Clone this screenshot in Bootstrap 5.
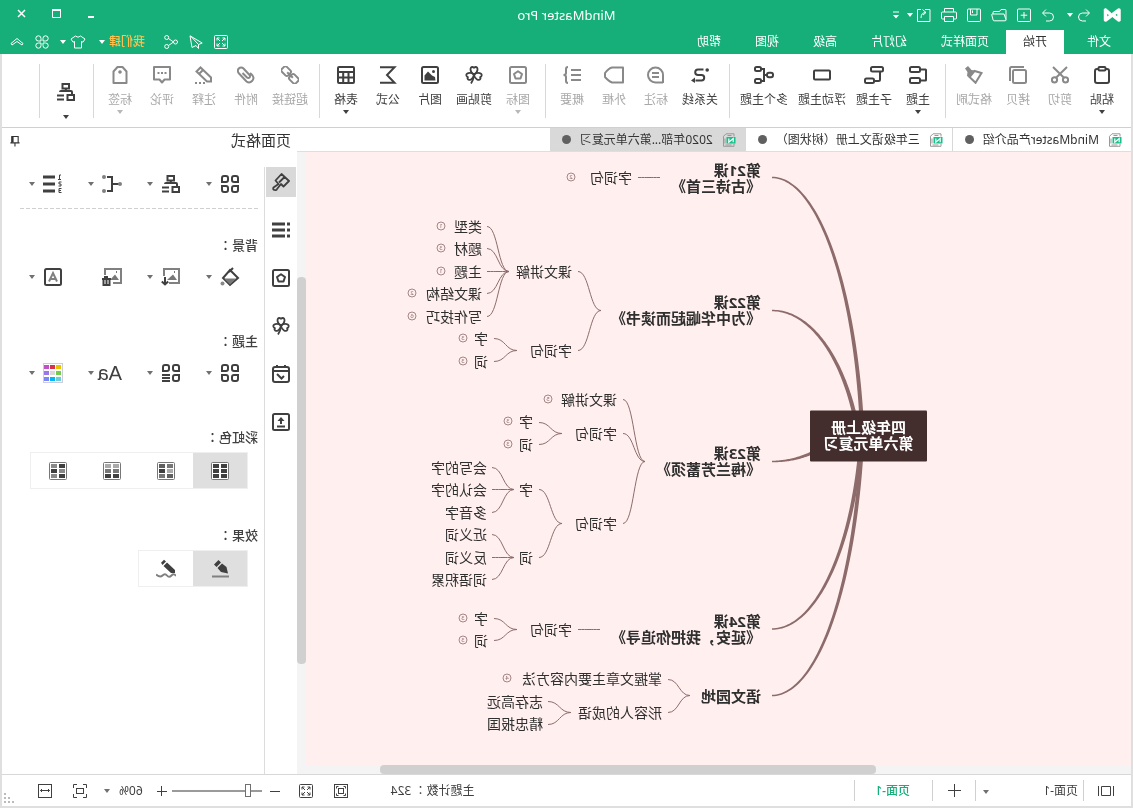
<!DOCTYPE html>
<html lang="zh-CN">
<head>
<meta charset="utf-8">
<meta name="viewport" content="width=device-width, initial-scale=1">
<title>MindMaster Pro</title>
<link href="https://cdn.jsdelivr.net/npm/bootstrap@5.3.0/dist/css/bootstrap.min.css" rel="stylesheet">
<style>
  :root { --brand: #16ae79; --ink: #404040; --line: #d8d8d8; --branch: #8d6b6b; }
  body { font-family: "Noto Sans", "Noto Sans CJK SC", sans-serif; font-size: 12px; line-height: 16px; color: #333; background: #fff; }
  /* the whole window is shown flipped left to right */
  .app-window { min-height: 100vh; transform: scaleX(-1); overflow: hidden; }
  .app-body { border: 2px solid #dfdfdf; border-top: 0; min-height: 0; }
  button { border: 0; background: none; padding: 0; color: inherit; line-height: 16px; }
  svg { display: block; fill: none; stroke: currentColor; stroke-width: 2; flex: none; }
  .ic { width: 18px; height: 18px; }
  .ic-sm { width: 14px; height: 14px; stroke-width: 1; }
  .ic-md { width: 20px; height: 20px; }
  .line { stroke-width: 1; }
  .tri { width: 0; height: 0; border: 3px solid transparent; border-top: 4px solid currentColor; border-bottom: 0; flex: none; }
  /* full-width colon set in the middle of its square */
  .mid-colon { font-family: "Noto Sans CJK TC", sans-serif; }

  .title-row { background: var(--brand); color: #fff; height: 30px; }
  .title-left { padding-left: 12px; }
  .title-text { font-size: 13px; }
  .win-buttons { gap: 21px; padding-right: 14px; }
  .quick { gap: 10px; }
  .menu-row { background: var(--brand); color: #fff; height: 24px; }
  .menu-row .nav { padding-left: 5px; }
  .menu-row .nav-link { color: #fff; padding: 0 17px; line-height: 24px; border-radius: 0; }
  .menu-row .nav-link.active { background: #fff; color: #333; }
  .menu-row .first-tab { margin-right: 6px; }
  .menu-tools { gap: 11px; padding-right: 10px; }
  .user-btn { margin-right: 2px; }
  .user-name { color: #ffc04d; font-weight: 500; }

  .ribbon { height: 74px; border-bottom: 1px solid #d0d0d0; padding-left: 8px; }
  .tool { display: flex; flex-direction: column; align-items: center; min-width: 42px; padding: 12px 5px 0; color: var(--ink); }
  .tool span { margin-top: 8px; white-space: nowrap; }
  .tool .tri { margin-top: 2px; }
  .tool:disabled { color: #898989; }
  .tool:disabled span { color: #a8a8a8; }
  .tool:disabled .tri { color: #b8b8b8; }
  .tool.big { padding-top: 29px; }
  .tool.big .tri { margin-top: 14px; }
  .rule { width: 1px; background: var(--line); margin: 10px 6px 9px 5px; flex: none; }

  .doc-tab { height: 23px; padding: 0 12px 0 9px; gap: 9px; color: #333; text-decoration: none; border-right: 1px solid var(--line); white-space: nowrap; }
  .doc-tab.current { background: #d9d9d9; border-right: 0; }
  .dot { width: 9px; height: 9px; border-radius: 50%; background: #606060; }
  .doc-tabs { height: 24px; border-bottom: 1px solid #dedede; }

  .canvas { background: #fff0ef; position: relative; overflow: hidden; }
  .canvas > svg { position: absolute; left: 0; top: 0; width: 100%; height: 100%; stroke: var(--branch); stroke-width: 1; }
  .topic { position: absolute; font-size: 14px; white-space: nowrap; transform: translateY(-50%); color: #2f2f2f; }
  .topic.main-topic { font-size: 15px; font-weight: 700; }
  .topic.central { width: 117px; padding: 8px 0 11px; text-align: center; color: #fff; background: #432e2d; border-radius: 1px; font-size: 15px; font-weight: 700; }
  .count { position: absolute; width: 9px; height: 9px; border: 1px solid #a58585; border-radius: 50%; color: #8d6b6b; font-size: 6px; line-height: 7px; text-align: center; transform: translate(-50%, -50%); }
  .hbar { height: 9px; background: #f4f4f4; padding-left: 255px; }
  .hbar div { width: 87%; background: #d0d0d0; border-radius: 4px; }
  .vbar { width: 9px; background: #f4f4f4; padding-top: 125px; }
  .vbar div { height: 387px; background: #d0d0d0; border-radius: 4px; }

  .side { width: 295px; flex: none; }
  .side-head { height: 39px; padding: 0 7px 0 6px; }
  .side-head h2 { font-size: 15px; line-height: 24px; margin: 0; font-weight: 400; }
  .strip { width: 32px; gap: 18px; flex: none; padding-left: 1px; }
  .strip button { width: 30px; height: 30px; display: grid; place-items: center; color: var(--ink); }
  .strip .on { background: #d9d9d9; }
  .props { border-left: 1px solid #dcdcdc; padding: 7px 18px 0 6px; color: var(--ink); min-width: 0; }
  .pick-row { display: grid; grid-template-columns: repeat(4, 59px); padding-left: 18px; height: 20px; }
  .pick-row button { display: flex; align-items: center; gap: 8px; }
  .pick-row .tri { color: #707070; }
  .pick-row.spaced { margin: 13px 0 45px; }
  .dash { height: 1px; margin: 14px 0 27px; background: repeating-linear-gradient(90deg, #d0d0d0 0 4px, transparent 4px 6px); }
  .props h3 { font-size: 13px; line-height: 18px; font-weight: 500; margin: 0; }
  .aa-text { width: 22px; font-family: "Liberation Sans", sans-serif; font-size: 20px; line-height: 20px; margin-right: -2px; }
  .seg { border: 1px solid #efefef; width: max-content; margin: 6px 0 37px 10px; }
  .seg button { width: 54px; height: 35px; display: grid; place-items: center; }
  .seg .on { background: #dfdfdf; }

  .status { height: 32px; border-top: 1px solid #d8d8d8; color: var(--ink); }
  .status .bar { width: 1px; height: 21px; background: #d0d0d0; flex: none; }
  .status .tri { color: #707070; }
  .page-pick { width: 107px; position: relative; }
  .page-pick select { appearance: none; border: 0; background: none; padding: 0 0 0 5px; width: 100%; color: inherit; }
  .page-pick .tri { position: absolute; right: 7px; top: 7px; pointer-events: none; }
  .page-link-on { color: var(--brand); font-weight: 500; text-decoration: none; padding: 0 20px 0 22px; }
  input[type=range] { appearance: none; width: 90px; height: 16px; background: linear-gradient(#9a9a9a, #9a9a9a) center / 100% 2px no-repeat; margin: 0; }
  input[type=range]::-webkit-slider-thumb { appearance: none; width: 6px; height: 13px; background: #fff; border: 1px solid #707070; }
  .view-btn { padding: 0 14px 0 17px; }
  .add-btn { padding: 0 14px; }
  .topic-count { margin-right: 43px; }
  .fill-btn { margin-left: 21px; }
  .minus-btn { margin: 0 8px 0 19px; }
  .plus-btn { margin: 0 14px 0 5px; }
  .percent { margin-right: 9px; }
  .focus-btn { margin-left: 17px; }
  .wide-btn { margin: 0 24px 0 21px; }
  .zoom-tools { padding-right: 2px; }
  .grip { margin-top: 15px; }
</style>
</head>
<body>

<svg width="0" height="0" class="position-absolute" aria-hidden="true">
  <symbol id="logo" viewBox="0 0 18 14"><path d="M2 12V2L15.500 12V2M2 12 6.500 8.500M15.500 2 11.500 5.500" stroke-width="3.500" stroke-linejoin="round" stroke-linecap="round"/></symbol>
  <symbol id="undo" viewBox="0 0 14 14"><path d="M5 1.500 1.500 5 5 8.500M2 5h6.500a4 4 0 0 1 0 8H5"/></symbol>
  <symbol id="redo" viewBox="0 0 14 14"><path d="M9 1.500 12.500 5 9 8.500M12 5H5.500a4 4 0 0 0 0 8H9"/></symbol>
  <symbol id="new" viewBox="0 0 14 14"><rect x=".5" y="1" width="13" height="12.500" rx="1"/><path d="M7 4v6.500M3.800 7.200h6.500"/></symbol>
  <symbol id="open" viewBox="0 0 16 14"><path d="M1 11.500V2.500a1 1 0 0 1 1-1h4l1.500 2H13a1 1 0 0 1 1 1V6M3 6h11.500q1 0 .7 1l-1.300 5q-.2.800-1 .8H2q-1.200 0-1-1.200z"/></symbol>
  <symbol id="save" viewBox="0 0 14 14"><rect x=".5" y="1" width="13" height="12.500" rx="1"/><path d="M4 1v6h6.500V1M8.500 2.500V5"/></symbol>
  <symbol id="print" viewBox="0 0 16 14"><path d="M3.500 4V.5h9V4M3.500 11H1.500a1 1 0 0 1-1-1V5a1 1 0 0 1 1-1h13a1 1 0 0 1 1 1v5a1 1 0 0 1-1 1h-2M3.500 8.500h9v5h-9z"/></symbol>
  <symbol id="export" viewBox="0 0 14 14"><path d="M6 1.500H1v12h12.500V1.500H10M5 4.500l3.500-3M5 4.500 8 7M5 4.500q5 0 5 5.500"/></symbol>
  <symbol id="full" viewBox="0 0 14 14"><rect x=".5" y=".5" width="13" height="13" rx="1"/><path d="M3 5.500V3h2.500M8.500 3H11v2.500M11 8.500V11H8.500M5.500 11H3V8.500M3 3l3 3M11 3 8 6M11 11 8 8M3 11l3-3"/></symbol>
  <symbol id="send" viewBox="0 0 14 14"><path d="M13 .8.8 8l3.700 1.500v4L7 10.500l4 2zM12.500 1 4.500 9.500"/></symbol>
  <symbol id="share" viewBox="0 0 14 14"><circle cx="2.500" cy="7" r="2"/><circle cx="11.300" cy="2.500" r="2"/><circle cx="11.300" cy="11.500" r="2"/><path d="M4.500 7 9.500 3.500M4.500 7 9.500 10.500"/></symbol>
  <symbol id="shirt" viewBox="0 0 16 14"><path d="M5.500 1q2.500 2.500 5 0l4.500 3-2 3.200-1.500-.7V13h-7V6.500L3 7.200 1 4z"/></symbol>
  <symbol id="four" viewBox="0 0 14 14"><path d="M6 6V3.500A2.600 2.600 0 1 0 3.400 6zM8 6V3.500A2.600 2.600 0 1 1 10.600 6zM6 8v2.500A2.600 2.600 0 1 1 3.400 8zM8 8v2.500A2.600 2.600 0 1 0 10.600 8z"/></symbol>
  <symbol id="up" viewBox="0 0 14 14"><path d="M1 8.500 7 3.500l6 5-1 1.500-5-3.500L2 10z"/></symbol>

  <symbol id="paste" viewBox="0 0 18 18"><rect x="2" y="3" width="14" height="14" rx="2"/><rect x="5.500" y="1" width="7" height="3.500" rx="1" fill="#fff"/></symbol>
  <symbol id="cut" viewBox="0 0 18 18"><circle cx="3.500" cy="13.800" r="2.600"/><circle cx="14.500" cy="13.800" r="2.600"/><path d="M5 11.800 16 1M13 11.800 2 1"/></symbol>
  <symbol id="copy" viewBox="0 0 18 18"><rect x="1" y="4" width="13" height="13" rx="1.500"/><path d="M3 1h12.500A1.500 1.500 0 0 1 17 2.500V15"/></symbol>
  <symbol id="brush" viewBox="0 0 18 18"><path d="M1.500 7 8.500 5l5 6-6 5.800z"/><path d="M8.500 4.500 11.500 4l3.500-4 3 2.500-2.500 3.500.5 4-3 2z" fill="currentColor" stroke="none"/></symbol>
  <symbol id="topic" viewBox="0 0 18 18"><rect x="7" y="1" width="10" height="5" rx="1.500"/><rect x="7" y="12" width="10" height="5" rx="1.500"/><path d="M7 3.500H1.500q-.5 0-.5.5v10q0 .5.500.5H7"/></symbol>
  <symbol id="subtopic" viewBox="0 0 20 18"><rect x="1" y="1" width="12" height="4.500" rx="1.500"/><rect x="10" y="12.500" width="9" height="4.500" rx="1.500"/><path d="M4 6v7.500q0 1.500 1.500 1.500H10"/></symbol>
  <symbol id="float" viewBox="0 0 18 18"><rect x="1" y="4.500" width="16" height="9" rx="1"/></symbol>
  <symbol id="multi" viewBox="0 0 20 18"><rect x="1" y="6.800" width="6" height="4.400" rx="2"/><rect x="13" y="1" width="6" height="4" rx="1.500"/><rect x="13" y="13" width="6" height="4" rx="1.500"/><path d="M7 9h3M13 3h-3v12h3"/></symbol>
  <symbol id="relation" viewBox="0 0 18 18"><path d="M5.500 3.500H11a2.800 2.800 0 0 1 0 5.600H7.500a2.700 2.700 0 0 0 0 5.400h6"/><circle cx="1.800" cy="4" r="1.800" fill="currentColor" stroke="none"/><path d="M14 11.500v5.500l4-2.500z" fill="currentColor" stroke="none"/></symbol>
  <symbol id="callout" viewBox="0 0 18 18"><path d="M2 17V9a7.500 7.500 0 1 1 7.500 7.500H2"/><path d="M6 7h7M6 11h7"/></symbol>
  <symbol id="frame" viewBox="0 0 20 18"><path d="M1 1.500h11q3 .5 7 5.500v4q-4 4.500-7 5.500H1z" stroke-linejoin="round"/></symbol>
  <symbol id="summary" viewBox="0 0 18 18"><path d="M0 4h10M0 9h10M0 14h10M13 1q2 0 2 2v4q0 2 2.500 2-2.500 0-2.500 2v4q0 2-2 2"/></symbol>
  <symbol id="icon" viewBox="0 0 18 18"><rect x="1" y="1" width="16" height="16" rx="1.500"/><path d="M9 5.200 13 8l-1.500 4.500h-5L5 8z" stroke-linejoin="round"/></symbol>
  <symbol id="clover" viewBox="0 0 18 18"><g stroke-width="1.800"><path d="M9 8.500C4.500 6 4.800 1 7.300 1Q9 1 9 2.600 9 1 10.700 1C13.200 1 13.500 6 9 8.500z"/><path d="M9 8.500C4.500 6 4.800 1 7.300 1Q9 1 9 2.600 9 1 10.700 1C13.200 1 13.500 6 9 8.500z" transform="rotate(112 9 8.500)"/><path d="M9 8.500C4.500 6 4.800 1 7.300 1Q9 1 9 2.600 9 1 10.700 1C13.200 1 13.500 6 9 8.500z" transform="rotate(-112 9 8.500)"/><path d="M9 8.500Q9.500 14 12 17.500"/></g></symbol>
  <symbol id="image" viewBox="0 0 18 18"><rect x="1" y="1" width="16" height="16" rx="1.500"/><path d="M3.500 14.500 4 11l3-1.500 4-4 3.500 4v5z" fill="currentColor" stroke="none"/><circle cx="5.500" cy="5.500" r="1.500" fill="currentColor" stroke="none"/></symbol>
  <symbol id="sigma" viewBox="0 0 18 18"><path d="M17 1.200H2.500L10 9l-7.500 7.800H17"/></symbol>
  <symbol id="tbl" viewBox="0 0 18 18"><rect x="1" y="1" width="16" height="16" rx="1"/><path d="M1 6h16M1 11.500h16M6.500 6v11M11.800 6v11"/></symbol>
  <symbol id="chain" viewBox="0 0 18 18"><g transform="rotate(-45 9 9)"><rect x="-1" y="5.500" width="9" height="7" rx="2"/><rect x="10" y="5.500" width="9" height="7" rx="2"/><path d="M5 9h8"/></g></symbol>
  <symbol id="clip" viewBox="0 0 18 18"><path d="M12.500 7 8 11.500a1.700 1.700 0 0 1-2.500-2.500l6-6.500a3.300 3.300 0 0 1 4.700 4.700L8.500 15.500a4.300 4.300 0 0 1-6-6L5 7"/></symbol>
  <symbol id="note" viewBox="0 0 18 18"><path d="M2 11.500 12.500 1.500l4 4L6 15.500H2zM10 4l4 4" /><path d="M8 17h2M12 17h2M16 17h2"/></symbol>
  <symbol id="comment" viewBox="0 0 18 18"><path d="M1 1h16v12.500h-5.500L9 16.500 6.500 13.500H1z" stroke-linejoin="round"/><path d="M4.500 7h2M8 7h2M11.500 7h2"/></symbol>
  <symbol id="tag" viewBox="0 0 18 18"><path d="M2.500 17V5.500L6.500 1h5l4 4.500V17z" stroke-linejoin="round"/><circle cx="9" cy="6" r="1.800" fill="currentColor" stroke="none"/></symbol>
  <symbol id="layout" viewBox="0 0 18 18"><rect x="6" y="1" width="6.500" height="4.500"/><path d="M9.200 5.500V8M3 12V9q0-1 1-1h10q1 0 1 1"/><rect x="1" y="12" width="6.500" height="5"/><path d="M11 12.500h7M11 16.500h7"/></symbol>
  <symbol id="doc" viewBox="0 0 14 14"><path d="M2 3.500V.8h8l2.500 2.500v10H2v-2.500" stroke="#999" stroke-width="1"/><path d="M4.500 2.500h4M4.500 12h6M11 5.500v5" stroke="#999" stroke-width="1"/><rect x=".5" y="4" width="9" height="6.500" fill="#16c08a" stroke="none"/><path d="M2.800 9.300V5.500L7.200 9.300V5.500" stroke="#fff" stroke-width="1.200"/></symbol>
  <symbol id="pin" viewBox="0 0 12 12"><path d="M2 .5h7v7H2zM.5 7.500h10M5.500 7.500v4" stroke-width="1.200"/><path d="M7 1h2v6H7z" fill="currentColor" stroke="none"/></symbol>

  <symbol id="paint" viewBox="0 0 18 18"><path d="M1 8 8.500 1l6 6.500-3 3.500 5 3.500q1 2-1 2.500t-2.500-1L9 11l-2.500 2.500zM5.500 4 11 9.500" stroke-width="1.800" stroke-linejoin="round"/></symbol>
  <symbol id="outline" viewBox="0 0 18 18"><path d="M5 3h13M5 9h13M5 15h13" stroke-width="3"/><path d="M0 3h3M0 9h3M0 15h3" stroke-width="3"/></symbol>
  <symbol id="cal" viewBox="0 0 18 18"><rect x="1" y="2" width="16" height="15" rx="2"/><path d="M1 6h16M5 0v3M13 0v3M13 9 8.500 13.500 6 11"/></symbol>
  <symbol id="upload" viewBox="0 0 18 18"><rect x="1" y="1" width="16" height="16" rx="1.500"/><path d="M9 11V5.500M5 13.500h8"/><path d="M5.500 8 9 4l3.500 4z" fill="currentColor" stroke="none"/></symbol>
  <symbol id="grid4" viewBox="0 0 20 20"><path d="M2 4q0-2 2-2h2q2 0 2 2v2q0 2-2 2H2zM12 4q0-2 2-2h2q2 0 2 2v4h-4q-2 0-2-2zM2 12h4q2 0 2 2v2q0 2-2 2H4q-2 0-2-2zM14 12h4v4q0 2-2 2h-2q-2 0-2-2v-2q0-2 2-2z"/></symbol>
  <symbol id="grid3" viewBox="0 0 20 20"><path d="M2 4q0-2 2-2h2q2 0 2 2v2q0 2-2 2H2zM12 4q0-2 2-2h2q2 0 2 2v4h-4q-2 0-2-2zM2 12h4q2 0 2 2v2q0 2-2 2H4q-2 0-2-2zM11 12h8M11 15h8M11 18h8"/></symbol>
  <symbol id="branch" viewBox="0 0 20 20"><path d="M3 10h6M15 3h-5v14h5"/><g fill="#808080" stroke="none"><circle cx="2" cy="10" r="2"/><circle cx="18" cy="3" r="2"/><circle cx="18" cy="17" r="2"/></g></symbol>
  <symbol id="numlist" viewBox="0 0 20 20"><path d="M8 3h12M8 10h12M8 17h12" stroke-width="3"/><path d="M2 1h1.500v4M2 5.500h3M1.500 8h2.500v2H2v2h2.500M1.500 14.500H4v4H1.500M2 16.500h2" stroke-width="1"/></symbol>
  <symbol id="bucket" viewBox="0 0 20 20"><path d="M2 11 10 3l7 8-7 7zM7 1l4 4" /><path d="M4 11.500h12l-6 6z" fill="#777" stroke="none"/><circle cx="17.500" cy="16.500" r="2" fill="#888" stroke="none"/></symbol>
  <symbol id="imgdown" viewBox="0 0 20 20"><g stroke="#808080"><path d="M12 16H2V2h15v7"/></g><path d="M4 13 8 7.500l6 5.500z" fill="#777" stroke="none"/><path d="M6 5h1" stroke="#777"/><path d="M16 10v7.500M12.800 14.500l3.200 3 3.200-3"/></symbol>
  <symbol id="imgdel" viewBox="0 0 20 20"><g stroke="#808080"><path d="M9 16H1V2h16v6"/></g><path d="M3 13 7 7.500l5 5.500z" fill="#777" stroke="none"/><path d="M5 5h1" stroke="#777"/><path d="M11 12h9M14 10h4M12.500 12v6h6v-6M15.500 13v4"/></symbol>
  <symbol id="boxa" viewBox="0 0 20 20"><rect x="2" y="2" width="16" height="16" rx="1.500"/><path d="M6 14.500 10 6l4 8.500M7.500 12h5" stroke="#808080"/></symbol>
  <symbol id="palette" viewBox="0 0 20 20"><rect x=".5" y=".5" width="19" height="19" fill="#fff" stroke="#ccd" stroke-width="1"/><g stroke="none"><path d="M2 2h5v4H2z" fill="#eac300"/><path d="M8 2h5v4H8z" fill="#d9304c"/><path d="M14 2h5v4h-5z" fill="#c050c8"/><path d="M2 8h5v4H2z" fill="#73cc4e"/><path d="M8 8h5v4H8z" fill="#d8d8d8"/><path d="M14 8h5v4h-5z" fill="#9a77e8"/><path d="M2 14h5v4H2z" fill="#6cccd8"/><path d="M8 14h5v4H8z" fill="#00b8f4"/><path d="M14 14h5v4h-5z" fill="#7a86f5"/></g></symbol>
  <symbol id="sw1" viewBox="0 0 18 18"><rect x=".5" y=".5" width="17" height="17" rx="1" fill="#fff" stroke="#777" stroke-width="1"/><path d="M2 4h6M10 4h6M2 9h6M10 9h6M2 14h6M10 14h6" stroke-width="4"/></symbol>
  <symbol id="sw2" viewBox="0 0 18 18"><rect x=".5" y=".5" width="17" height="17" rx="1" stroke="#777" stroke-width="1"/><g stroke-width="4"><path d="M2 4h6" stroke="#777"/><path d="M10 4h6M2 14h6" stroke="#606060"/><path d="M2 9h6" stroke="#aaa"/><path d="M10 9h6"/><path d="M10 14h6" stroke="#777"/></g></symbol>
  <symbol id="sw3" viewBox="0 0 18 18"><rect x=".5" y=".5" width="17" height="17" rx="1" stroke="#777" stroke-width="1"/><g stroke-width="4"><path d="M2 4h6M10 4h6" stroke="#aaa"/><path d="M2 9h6M10 9h6" stroke="#777"/><path d="M2 14h6M10 14h6"/></g></symbol>
  <symbol id="sw4" viewBox="0 0 18 18"><rect x=".5" y=".5" width="17" height="17" rx="1" stroke="#777" stroke-width="1"/><g stroke-width="4"><path d="M2 4h6M10 9h6M2 14h6"/><path d="M10 4h6M2 9h6M10 14h6" stroke="#888"/></g></symbol>
  <symbol id="pen" viewBox="0 0 20 20"><path d="M1 17.500h17" stroke="#808080"/><path d="M2 14.500 3.500 8 8 4.500l4.500 4.500L9 13zM9 3.500 11.500 1 16 5.500 13.500 8z" fill="currentColor" stroke="none"/></symbol>
  <symbol id="pencil" viewBox="0 0 20 20"><path d="M0 17q2-3 4.500-.5T9 16.500t4.500 0T20 15.500" stroke="#808080"/><path d="M1 14V11L9 3.500 12.500 7 5 14zM10 2.500 12 .8l3 3L13.500 6z" fill="currentColor" stroke="none"/></symbol>

  <symbol id="view" viewBox="0 0 16 14"><path d="M.5 2v10M15.500 2v10M3.500 2.500h9v9h-9z"/></symbol>
  <symbol id="fit" viewBox="0 0 14 14"><rect x=".5" y=".5" width="13" height="13"/><rect x="4.500" y="4.500" width="5" height="5"/><path d="M2.500 4.500v-2h2M9.500 2.500h2v2M11.500 9.500v2h-2M4.500 11.500h-2v-2"/></symbol>
  <symbol id="focus" viewBox="0 0 14 14"><path d="M.5 4V.5H4M10 .5h3.500V4M13.500 10v3.500H10M4 13.500H.5V10"/><rect x="3.500" y="4.500" width="7" height="5"/></symbol>
  <symbol id="wide" viewBox="0 0 14 14"><rect x=".5" y=".5" width="13" height="13"/><path d="M2.500 6.500h9M4 5 2.500 6.500 4 8M10 5l1.500 1.500L10 8"/></symbol>
  <symbol id="plus" viewBox="0 0 14 14"><path d="M6.500 0v13M0 6.500h13"/></symbol>
</svg>

<div class="app-window d-flex flex-column">
  <header>
    <div class="title-row d-flex align-items-center justify-content-between position-relative">
      <div class="title-left d-flex align-items-center">
        <svg class="ic me-2"><use href="#logo"/></svg>
        <div class="d-flex align-items-center ps-1">
          <button aria-label="撤销"><svg class="ic-sm"><use href="#undo"/></svg></button>
          <i class="tri ms-1"></i>
        </div>
        <div class="quick d-flex align-items-center ms-2">
          <button class="ms-1" aria-label="恢复"><svg class="ic-sm"><use href="#redo"/></svg></button>
          <button aria-label="新建"><svg class="ic-sm"><use href="#new"/></svg></button>
          <button aria-label="打开"><svg class="line" width="16" height="14"><use href="#open"/></svg></button>
          <button aria-label="保存"><svg class="ic-sm"><use href="#save"/></svg></button>
          <button aria-label="打印"><svg class="line" width="16" height="14"><use href="#print"/></svg></button>
          <button aria-label="导出"><svg class="ic-sm"><use href="#export"/></svg></button>
        </div>
        <i class="tri ms-1"></i>
        <svg class="line ms-2" width="6" height="8" viewBox="0 0 6 8"><path d="M0 1h6" /><path d="M0 4h6L3 7.500z" fill="currentColor" stroke="none"/></svg>
      </div>
      <div class="title-text position-absolute start-50 translate-middle-x">MindMaster Pro</div>
      <div class="win-buttons d-flex align-items-center">
        <button aria-label="最小化"><svg class="ic-sm" viewBox="0 0 14 14"><path d="M4 9h6" stroke-width="2"/></svg></button>
        <button aria-label="最大化"><svg class="ic-sm" viewBox="0 0 14 14"><path d="M2.500 2.500h8v7h-8z"/><path d="M2 2h9" stroke-width="2"/></svg></button>
        <button aria-label="关闭"><svg class="ic-sm" viewBox="0 0 14 14"><path d="M3 2 10 9M10 2 3 9" stroke-width="1.500"/></svg></button>
      </div>
    </div>
    <div class="menu-row d-flex align-items-center justify-content-between">
      <nav class="nav flex-nowrap">
        <a class="nav-link first-tab" href="#">文件</a>
        <a class="nav-link active" href="#">开始</a>
        <a class="nav-link" href="#">页面样式</a>
        <a class="nav-link" href="#">幻灯片</a>
        <a class="nav-link" href="#">高级</a>
        <a class="nav-link" href="#">视图</a>
        <a class="nav-link" href="#">帮助</a>
      </nav>
      <div class="menu-tools d-flex align-items-center">
        <button aria-label="全屏"><svg class="ic-sm"><use href="#full"/></svg></button>
        <button aria-label="发送"><svg class="ic-sm"><use href="#send"/></svg></button>
        <button aria-label="分享"><svg class="ic-sm"><use href="#share"/></svg></button>
        <button class="user-btn d-flex align-items-center gap-1 ms-2"><span class="user-name">我们肆</span><i class="tri"></i></button>
        <button class="d-flex align-items-center" aria-label="皮肤"><svg class="line" width="16" height="14"><use href="#shirt"/></svg><i class="tri ms-1"></i></button>
        <button aria-label="应用"><svg class="ic-sm"><use href="#four"/></svg></button>
        <button aria-label="收起"><svg class="ic-sm"><use href="#up"/></svg></button>
      </div>
    </div>
  </header>

  <div class="app-body flex-grow-1 d-flex flex-column">
    <div class="ribbon d-flex">
      <button class="tool"><svg class="ic"><use href="#paste"/></svg><span>粘贴</span><i class="tri"></i></button>
      <button class="tool" disabled><svg class="ic"><use href="#cut"/></svg><span>剪切</span></button>
      <button class="tool" disabled><svg class="ic"><use href="#copy"/></svg><span>拷贝</span></button>
      <button class="tool" disabled><svg class="ic"><use href="#brush"/></svg><span>格式刷</span></button>
      <div class="rule"></div>
      <button class="tool"><svg class="ic"><use href="#topic"/></svg><span>主题</span><i class="tri"></i></button>
      <button class="tool"><svg width="20" height="18"><use href="#subtopic"/></svg><span>子主题</span></button>
      <button class="tool"><svg class="ic"><use href="#float"/></svg><span>浮动主题</span></button>
      <button class="tool"><svg width="20" height="18"><use href="#multi"/></svg><span>多个主题</span></button>
      <div class="rule"></div>
      <button class="tool"><svg class="ic"><use href="#relation"/></svg><span>关系线</span></button>
      <button class="tool" disabled><svg class="ic"><use href="#callout"/></svg><span>标注</span></button>
      <button class="tool" disabled><svg width="20" height="18"><use href="#frame"/></svg><span>外框</span></button>
      <button class="tool" disabled><svg class="ic"><use href="#summary"/></svg><span>概要</span></button>
      <div class="rule"></div>
      <button class="tool" disabled><svg class="ic"><use href="#icon"/></svg><span>图标</span><i class="tri"></i></button>
      <button class="tool"><svg class="ic"><use href="#clover"/></svg><span>剪贴画</span></button>
      <button class="tool"><svg class="ic"><use href="#image"/></svg><span>图片</span></button>
      <button class="tool"><svg class="ic"><use href="#sigma"/></svg><span>公式</span></button>
      <button class="tool"><svg class="ic"><use href="#tbl"/></svg><span>表格</span><i class="tri"></i></button>
      <div class="rule"></div>
      <button class="tool" disabled><svg class="ic"><use href="#chain"/></svg><span>超链接</span></button>
      <button class="tool" disabled><svg class="ic"><use href="#clip"/></svg><span>附件</span></button>
      <button class="tool" disabled><svg class="ic"><use href="#note"/></svg><span>注释</span></button>
      <button class="tool" disabled><svg class="ic"><use href="#comment"/></svg><span>评论</span></button>
      <button class="tool" disabled><svg class="ic"><use href="#tag"/></svg><span>标签</span><i class="tri"></i></button>
      <div class="rule"></div>
      <button class="tool big" aria-label="布局"><svg class="ic"><use href="#layout"/></svg><i class="tri"></i></button>
      <div class="rule"></div>
    </div>

    <div class="d-flex flex-grow-1">
      <main class="flex-grow-1 d-flex flex-column">
        <div class="d-flex doc-tabs">
          <a class="doc-tab d-flex align-items-center" href="#"><svg class="ic-sm"><use href="#doc"/></svg>MindMaster产品介绍<i class="dot"></i></a>
          <a class="doc-tab d-flex align-items-center" href="#"><svg class="ic-sm"><use href="#doc"/></svg>三年级语文上册（树状图）<i class="dot"></i></a>
          <a class="doc-tab current d-flex align-items-center" href="#"><svg class="ic-sm"><use href="#doc"/></svg>2020年部...第六单元复习<i class="dot"></i></a>
        </div>
        <div class="d-flex flex-grow-1">
          <div class="flex-grow-1 d-flex flex-column">
            <div class="canvas flex-grow-1" id="map"></div>
            <div class="hbar d-flex"><div></div></div>
          </div>
          <div class="vbar"><div></div></div>
        </div>
      </main>

      <aside class="side d-flex flex-column">
        <div class="side-head d-flex justify-content-between">
          <h2>页面格式</h2>
          <button class="align-self-start mt-2" aria-label="固定"><svg width="11" height="11"><use href="#pin"/></svg></button>
        </div>
        <div class="d-flex flex-grow-1">
          <div class="strip d-flex flex-column">
            <button class="on" aria-label="格式"><svg class="ic"><use href="#paint"/></svg></button>
            <button aria-label="大纲"><svg class="ic"><use href="#outline"/></svg></button>
            <button aria-label="图标"><svg class="ic"><use href="#icon"/></svg></button>
            <button aria-label="剪贴画"><svg class="ic"><use href="#clover"/></svg></button>
            <button aria-label="任务"><svg class="ic"><use href="#cal"/></svg></button>
            <button aria-label="上传"><svg class="ic"><use href="#upload"/></svg></button>
          </div>
          <div class="props flex-grow-1">
            <div class="pick-row">
              <button aria-label="版式"><svg class="ic-md"><use href="#grid4"/></svg><i class="tri"></i></button>
              <button aria-label="布局"><svg class="ic-md" viewBox="-1 -1 20 20"><use href="#layout" width="18" height="18"/></svg><i class="tri"></i></button>
              <button aria-label="分支"><svg class="ic-md"><use href="#branch"/></svg><i class="tri"></i></button>
              <button aria-label="编号"><svg class="ic-md"><use href="#numlist"/></svg><i class="tri"></i></button>
            </div>
            <div class="dash"></div>
            <h3>背景<span class="mid-colon" lang="zh-TW">：</span></h3>
            <div class="pick-row spaced">
              <button aria-label="填充"><svg class="ic-md"><use href="#bucket"/></svg><i class="tri"></i></button>
              <button aria-label="插入图片"><svg class="ic-md"><use href="#imgdown"/></svg><i class="tri"></i></button>
              <button aria-label="删除图片"><svg class="ic-md"><use href="#imgdel"/></svg></button>
              <button aria-label="水印"><svg class="ic-md"><use href="#boxa"/></svg><i class="tri"></i></button>
            </div>
            <h3>主题<span class="mid-colon" lang="zh-TW">：</span></h3>
            <div class="pick-row spaced">
              <button aria-label="主题"><svg class="ic-md"><use href="#grid4"/></svg><i class="tri"></i></button>
              <button aria-label="主题列表"><svg class="ic-md"><use href="#grid3"/></svg><i class="tri"></i></button>
              <button><span class="aa-text">Aa</span><i class="tri"></i></button>
              <button aria-label="颜色"><svg class="ic-md"><use href="#palette"/></svg><i class="tri"></i></button>
            </div>
            <h3>彩虹色<span class="mid-colon" lang="zh-TW">：</span></h3>
            <div class="seg d-flex">
              <button class="on" aria-label="单色"><svg class="ic"><use href="#sw1"/></svg></button>
              <button aria-label="彩虹一"><svg class="ic"><use href="#sw2"/></svg></button>
              <button aria-label="彩虹二"><svg class="ic"><use href="#sw3"/></svg></button>
              <button aria-label="彩虹三"><svg class="ic"><use href="#sw4"/></svg></button>
            </div>
            <h3>效果<span class="mid-colon" lang="zh-TW">：</span></h3>
            <div class="seg d-flex">
              <button class="on" aria-label="普通"><svg class="ic-md"><use href="#pen"/></svg></button>
              <button aria-label="手绘"><svg class="ic-md"><use href="#pencil"/></svg></button>
            </div>
          </div>
        </div>
      </aside>
    </div>

    <footer class="status d-flex align-items-center justify-content-between">
      <div class="d-flex align-items-center">
        <button class="view-btn" aria-label="视图"><svg class="line" width="16" height="14"><use href="#view"/></svg></button>
        <div class="bar"></div>
        <div class="page-pick"><select aria-label="页面"><option>页面-1</option></select><i class="tri"></i></div>
        <div class="bar"></div>
        <button class="add-btn" aria-label="添加页面"><svg class="ic-sm"><use href="#plus"/></svg></button>
        <div class="bar"></div>
        <a class="page-link-on" href="#">页面-1</a>
        <div class="bar"></div>
      </div>
      <div class="d-flex align-items-center zoom-tools">
        <span class="topic-count">主题计数<span class="mid-colon" lang="zh-TW">：</span> 324</span>
        <button aria-label="适应页面"><svg class="ic-sm"><use href="#fit"/></svg></button>
        <button class="fill-btn" aria-label="全屏"><svg class="ic-sm"><use href="#full"/></svg></button>
        <button class="minus-btn" aria-label="缩小"><svg class="line" width="10" height="12" viewBox="0 0 10 12"><path d="M0 6.500h10"/></svg></button>
        <input type="range" min="0" max="100" value="13" aria-label="缩放">
        <button class="plus-btn" aria-label="放大"><svg class="line" width="10" height="10" viewBox="0 0 10 10"><path d="M5.500 0v10M0 5.500h10"/></svg></button>
        <span class="percent">60%</span>
        <i class="tri"></i>
        <button class="focus-btn" aria-label="聚焦"><svg class="ic-sm"><use href="#focus"/></svg></button>
        <button class="wide-btn" aria-label="页宽"><svg class="ic-sm"><use href="#wide"/></svg></button>
        <svg class="grip" width="10" height="11" viewBox="0 0 10 11"><path d="M8 0h2v2H8zM8 4h2v2H8zM4 4h2v2H4zM8 8h2v2H8zM4 8h2v2H4zM0 8h2v2H0z" fill="#bbb" stroke="none"/></svg>
      </div>
    </footer>
  </div>
</div>

<script src="https://cdn.jsdelivr.net/npm/bootstrap@5.3.0/dist/js/bootstrap.bundle.min.js"></script>
<script>
  // topics: x of the left edge, y of the middle, text, x of the count badge, count
  const topics = [
    [499, 26, '字词句', 560, 2],
    [559, 120, '课文讲解'], [559, 199, '字词句'],
    [649, 75, '类型', 690, 1], [649, 97, '题材', 690, 3], [649, 120, '主题', 690, 1],
    [649, 142, '课文结构', 719, 2], [649, 165, '写作技巧', 719, 6],
    [643, 187, '字', 668, 3], [643, 210, '词', 668, 3],
    [514, 248, '课文讲解', 583, 5], [514, 282, '字词句'], [514, 372, '字词句'],
    [598, 270, '字', 623, 3], [598, 293, '词', 623, 3],
    [598, 338, '字'], [598, 406, '词'],
    [644, 316, '会写的字'], [644, 338, '会认的字'], [644, 361, '多音字'],
    [644, 383, '近义词'], [644, 406, '反义词'], [644, 428, '词语积累'],
    [559, 478, '字词句'], [643, 467, '字', 668, 3], [643, 489, '词', 668, 3],
    [469, 527, '掌握文章主要内容方法', 624, 4], [469, 561, '形容人的成语'],
    [588, 550, '志存高远'], [588, 572, '精忠报国']
  ];
  const mains = [
    [26, '第21课<br>《古诗三首》'], [158, '第22课<br>《为中华崛起而读书》'],
    [309, '第23课<br>《梅兰芳蓄须》'], [477, '第24课<br>《延安，我把你追寻》'], [544, '语文园地']
  ];
  // fans: joint x, joint y, child x, child ys
  const fans = [
    [471, 25.5, 493, [25.5]], [530, 158.5, 553, [119.5, 198.5]],
    [622, 119.5, 644, [74.5, 96.5, 119.5, 141.5, 164.5]], [614, 198.5, 637, [186.5, 209.5]],
    [486, 309.5, 508, [247.5, 281.5, 371.5]], [569, 281.5, 592, [270.5, 292.5]],
    [569, 371.5, 592, [337.5, 405.5]], [617, 337.5, 639, [315.5, 337.5, 360.5]],
    [617, 405.5, 639, [382.5, 405.5, 427.5]], [531, 477.5, 553, [477.5]],
    [614, 477.5, 637, [466.5, 488.5]], [441, 543.5, 463, [527.5, 560.5]], [560, 560.5, 583, [549.5, 572.5]]
  ];
  // tapering branches: end y, direction, ellipse height, reach
  const arms = [[25.5, 1, 295, 89.5], [158.5, 1, 180, 83], [309.5, -1, 85, 60], [477, -1, 235, 88], [543.5, -1, 300, 89.5]];
  const map = document.getElementById('map');
  let svg = '', html = '';
  for (const [jx, jy, cx, ys] of fans) for (const y of ys) {
    const m = (jx + cx) / 2;
    svg += `<path d="M${jx} ${jy}C${m} ${jy} ${m} ${y} ${cx} ${y}"/>`;
  }
  for (const [y0, dir, b, reach] of arms) {
    const a = 91, n = 60, one = [], two = [], last = Math.asin(reach / a);
    for (let i = 0; i <= n; i++) {
      const t = last * i / n, x = 359 - a * Math.sin(t), y = y0 + dir * b * (1 - Math.cos(t));
      let nx = dir * b * Math.sin(t), ny = a * Math.cos(t);
      const len = Math.hypot(nx, ny), w = 0.7 + 1.4 * i / n;
      nx = nx / len * w; ny = ny / len * w;
      one.push((x + nx) + ',' + (y + ny)); two.unshift((x - nx) + ',' + (y - ny));
    }
    svg += `<polygon points="${one.concat(two).join(' ')}" fill="#8d6b6b" stroke="none"/>`;
  }
  for (const [x, y, text, bx, count] of topics) {
    html += `<div class="topic" style="left:${x}px;top:${y}px">${text}</div>`;
    if (count) html += `<div class="count" style="left:${bx}px;top:${y - 1}px">${count}</div>`;
  }
  for (const [y, text] of mains) html += `<div class="topic main-topic" style="left:370px;top:${y}px">${text}</div>`;
  html += '<div class="topic central" style="left:204px;top:284px">四年级上册<br>第六单元复习</div>';
  map.innerHTML = `<svg>${svg}</svg>` + html;
</script>
</body>
</html>
